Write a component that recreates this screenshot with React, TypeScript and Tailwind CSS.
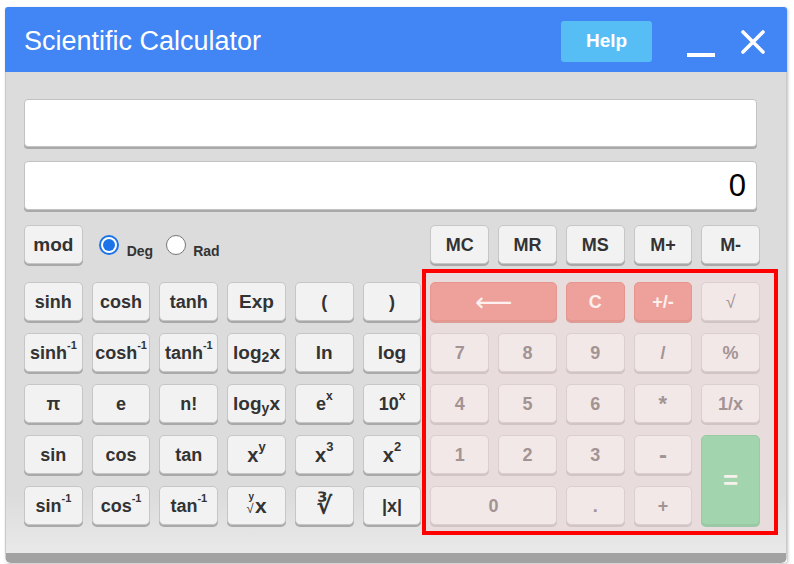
import type { ReactNode } from "react";

type Tone = "normal" | "faded" | "salmon" | "green";

const tones: Record<Tone, string> = {
  normal:
    "bg-[#f2f2f2] border-[#c6c6c6] shadow-[0_2px_0_#a9a9a9] text-[#333333]",
  faded:
    "bg-[#f3e8e8] border-[#dccfcf] shadow-[0_2px_0_#d2c4c4] text-[#a39494]",
  salmon:
    "bg-[#eea19b] border-[#e6958f] shadow-[0_2px_0_#dd9c96] text-[#fdf0ee]",
  green:
    "bg-[#a2d4ae] border-[#98cba4] shadow-[0_2px_0_#9cc8a6] text-[#f6f1ea]",
};

function Key({
  children,
  tone = "normal",
  className = "",
}: {
  children: ReactNode;
  tone?: Tone;
  className?: string;
}) {
  return (
    <button
      type="button"
      className={`relative flex items-center justify-center whitespace-nowrap rounded-[5px] border text-[18px] font-bold leading-none ${tones[tone]} ${className}`}
    >
      {children}
    </button>
  );
}

function Sup({ children }: { children: ReactNode }) {
  return <sup className="text-[11px] top-[-0.65em]">{children}</sup>;
}

function Radio({ checked }: { checked?: boolean }) {
  return checked ? (
    <span className="flex h-[20px] w-[20px] shrink-0 items-center justify-center rounded-full border-2 border-[#1a73e8] bg-white">
      <span className="h-[12px] w-[12px] rounded-full bg-[#1a73e8]" />
    </span>
  ) : (
    <span className="block h-[20px] w-[20px] shrink-0 rounded-full border border-[#767676] bg-white" />
  );
}

export default function App() {
  return (
    <div className="h-[564px] w-[794px] overflow-hidden bg-white font-['Liberation_Sans',Arial,sans-serif] pt-[7px] pl-[5px]">
      <div className="w-[782px] rounded-[3px] shadow-[1px_1px_3px_rgba(0,0,0,0.25)]">
        {/* title bar */}
        <div className="flex h-[65px] items-center rounded-t-[3px] bg-[#4285f4] pl-[19px] pr-[22px] pt-[4px]">
          <span className="flex-1 text-[27px] leading-none text-white">
            Scientific Calculator
          </span>
          <button
            type="button"
            className="h-[41px] w-[91px] rounded-[3px] bg-[#57bef5] text-[19px] font-bold text-white"
          >
            Help
          </button>
          <span className="ml-[35px] mt-[26px] h-[4px] w-[28px] bg-white" />
          <svg
            className="ml-[26px]"
            width="24"
            height="24"
            viewBox="0 0 24 24"
          >
            <path
              d="M2 2 L22 22 M22 2 L2 22"
              stroke="white"
              strokeWidth="3.6"
              strokeLinecap="round"
            />
          </svg>
        </div>

        {/* body */}
        <div className="relative isolate rounded-b-[6px] border-x border-b-[10px] border-x-[#c9c9c9] border-b-[#a2a2a2] bg-[linear-gradient(#dcdcdc_88%,#e9e9e9)] pb-[28px] pl-[18px] pr-[26px] pt-[27px]">
          <div className="mr-[3px] h-[48px] rounded-[4px] border border-[#c2c2c2] bg-white shadow-[0_2px_0_#a9a9a9]" />
          <div className="mr-[3px] mt-[14px] flex h-[49px] items-center justify-end rounded-[4px] border border-[#c2c2c2] bg-white pr-[10px] text-[31px] leading-none text-black shadow-[0_2px_0_#a9a9a9]">
            0
          </div>

          {/* red annotation box */}
          <div className="absolute left-[416px] top-[197px] -z-10 h-[266px] w-[356px] border-4 border-[#ff0000] bg-[#e9dcdc]" />

          {/* mod / angle / memory row */}
          <div className="mt-[15px] grid h-[39px] grid-cols-[repeat(11,minmax(0,1fr))] gap-x-[9px]">
            <Key className="text-[19px]">mod</Key>
            <div className="col-span-5 flex items-center pl-[7px] text-[14px] font-bold leading-none text-[#333333]">
              <Radio checked />
              <span className="ml-[8px] mt-[13px]">Deg</span>
              <span className="ml-[13px]">
                <Radio />
              </span>
              <span className="ml-[7px] mt-[13px]">Rad</span>
            </div>
            <Key>MC</Key>
            <Key>MR</Key>
            <Key>MS</Key>
            <Key>M+</Key>
            <Key>M-</Key>
          </div>

          {/* main keypad */}
          <div className="mt-[18px] grid grid-cols-[repeat(11,minmax(0,1fr))] grid-rows-[repeat(5,39px)] gap-x-[9px] gap-y-[12px]">
            {/* row 1 */}
            <Key>sinh</Key>
            <Key>cosh</Key>
            <Key>tanh</Key>
            <Key className="text-[19px]">Exp</Key>
            <Key>(</Key>
            <Key>)</Key>
            <Key
              tone="salmon"
              className="col-span-2 font-normal text-[26px] font-['DejaVu_Sans',sans-serif]"
            >
              ⟵
            </Key>
            <Key tone="salmon">C</Key>
            <Key tone="salmon">+/-</Key>
            <Key tone="faded" className="font-normal text-[17px]">
              √
            </Key>

            {/* row 2 */}
            <Key>
              sinh<Sup>-1</Sup>
            </Key>
            <Key>
              cosh<Sup>-1</Sup>
            </Key>
            <Key>
              tanh<Sup>-1</Sup>
            </Key>
            <Key className="text-[19px]">
              log<sub className="text-[14px] bottom-[-0.3em]">2</sub>x
            </Key>
            <Key className="text-[19px]">ln</Key>
            <Key className="text-[19px]">log</Key>
            <Key tone="faded">7</Key>
            <Key tone="faded">8</Key>
            <Key tone="faded">9</Key>
            <Key tone="faded">/</Key>
            <Key tone="faded">%</Key>

            {/* row 3 */}
            <Key>π</Key>
            <Key>e</Key>
            <Key>n!</Key>
            <Key className="text-[19px]">
              log<sub className="text-[14px] bottom-[-0.3em]">y</sub>x
            </Key>
            <Key>
              e<sup className="text-[12px] top-[-0.6em]">x</sup>
            </Key>
            <Key>
              10<sup className="text-[12px] top-[-0.6em]">x</sup>
            </Key>
            <Key tone="faded">4</Key>
            <Key tone="faded">5</Key>
            <Key tone="faded">6</Key>
            <Key tone="faded" className="text-[22px]">
              *
            </Key>
            <Key tone="faded">1/x</Key>

            {/* row 4 */}
            <Key>sin</Key>
            <Key>cos</Key>
            <Key>tan</Key>
            <Key className="text-[20px]">
              x<sup className="text-[13px] top-[-0.6em]">y</sup>
            </Key>
            <Key className="text-[20px]">
              x<sup className="text-[13px] top-[-0.6em]">3</sup>
            </Key>
            <Key className="text-[20px]">
              x<sup className="text-[13px] top-[-0.6em]">2</sup>
            </Key>
            <Key tone="faded">1</Key>
            <Key tone="faded">2</Key>
            <Key tone="faded">3</Key>
            <Key tone="faded" className="text-[24px]">
              -
            </Key>
            <Key tone="green" className="row-span-2 text-[26px]">
              =
            </Key>

            {/* row 5 */}
            <Key>
              sin<Sup>-1</Sup>
            </Key>
            <Key>
              cos<Sup>-1</Sup>
            </Key>
            <Key>
              tan<Sup>-1</Sup>
            </Key>
            <Key className="text-[21px]">
              <span className="mb-[4px] mr-[1px] inline-flex flex-col items-start leading-none">
                <span className="pl-[2px] text-[10px] font-bold">y</span>
                <span className="text-[13px] font-normal">√</span>
              </span>
              x
            </Key>
            <Key className="text-[24px] font-['DejaVu_Sans',sans-serif]">
              ∛
            </Key>
            <Key>|x|</Key>
            <Key tone="faded" className="col-span-2">
              0
            </Key>
            <Key tone="faded">.</Key>
            <Key tone="faded">+</Key>
          </div>
        </div>
      </div>
    </div>
  );
}
